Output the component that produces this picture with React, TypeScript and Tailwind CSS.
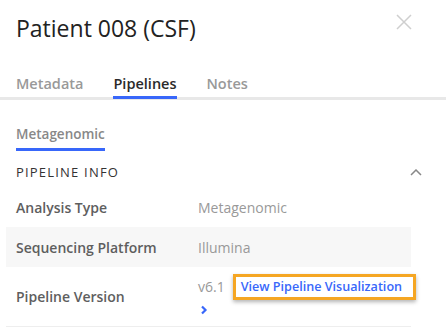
import React from 'react'

const font = { fontFamily: '"Open Sans", "Noto Sans", sans-serif' }

const Row = ({ label, children, shaded }: { label: string; children: React.ReactNode; shaded?: boolean }) => (
  <div className={`flex items-center px-[10px] min-h-[40px] ${shaded ? 'bg-[#f7f7f7]' : ''}`}>
    <div className="w-[182px] shrink-0 text-[14px] font-semibold text-[#5e5e5e]">{label}</div>
    <div className="text-[14px] text-[#999]">{children}</div>
  </div>
)

const App = (): JSX.Element => {
  return (
    <div className="w-[446px] h-[329px] bg-white overflow-hidden" style={font}>
      <div className="flex items-start justify-between pl-4 pr-[34px] pt-[13px]">
        <h1 className="text-[23px] leading-[30px] font-medium text-[#222]">Patient 008 (CSF)</h1>
        <svg width="16" height="16" viewBox="0 0 16 16" className="mt-[1px]">
          <path d="M1 1L15 15M15 1L1 15" stroke="#cfcfcf" strokeWidth="1.5" />
        </svg>
      </div>

      <div className="mt-[31px] flex gap-[30px] pl-4 border-b-[3px] border-[#e8e8e8]">
        <div className="text-[14.5px] leading-[20px] font-semibold text-[#999] pb-[3px]">Metadata</div>
        <div className="text-[14.5px] leading-[20px] font-semibold text-[#2a2a2a] pb-[3px] relative">
          Pipelines
          <span className="absolute left-0 right-0 -bottom-[2px] h-[3px] bg-[#3867fa]" />
        </div>
        <div className="text-[14.5px] leading-[20px] font-semibold text-[#999] pb-[3px]">Notes</div>
      </div>

      <div className="pl-4 mt-[21px]">
        <div className="inline-block text-[13.5px] leading-[18px] font-semibold text-[#888] pb-[5px] border-b-[3px] border-[#3867fa]">
          Metagenomic
        </div>
      </div>

      <div className="flex items-center justify-between pl-4 pr-[24px] mt-[12px]">
        <div className="text-[13px] leading-[18px] tracking-[1.2px] text-[#333]">PIPELINE INFO</div>
        <svg width="12" height="7" viewBox="0 0 12 7">
          <path d="M1 6L6 1L11 6" stroke="#888" strokeWidth="1.5" fill="none" />
        </svg>
      </div>

      <div className="ml-[6px] w-[405px] mt-[6px] border-b border-[#eee]">
        <Row label="Analysis Type">Metagenomic</Row>
        <Row label="Sequencing Platform" shaded>
          Illumina
        </Row>
        <div className="flex items-center px-[10px] h-[59px]">
          <div className="w-[182px] shrink-0 text-[14px] font-semibold text-[#5e5e5e]">Pipeline Version</div>
          <div className="flex flex-col pt-[1px]">
            <div className="flex items-center">
              <span className="text-[14px] leading-[20px] text-[#999]">v6.1</span>
              <span className="ml-[8px] whitespace-nowrap border-[3px] border-[#f5a623] pl-[5px] pr-[11px] text-[12.6px] leading-[20px] font-semibold text-[#3867fa] shadow-[0_2px_4px_rgba(0,0,0,0.3)]">
                View Pipeline Visualization
              </span>
            </div>
            <svg width="8" height="20" viewBox="0 0 8 20" className="ml-[2px]">
              <path d="M2 6.5L5.5 10L2 13.5" stroke="#3867fa" strokeWidth="2.2" fill="none" />
            </svg>
          </div>
        </div>
      </div>
    </div>
  )
}

export default App
